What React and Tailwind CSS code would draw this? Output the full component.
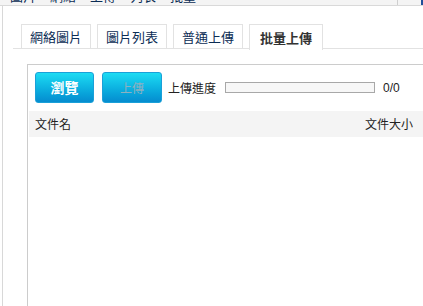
const TABS = [
  { label: '網絡圖片', w: 'w-[70px]' },
  { label: '圖片列表', w: 'w-[70px]' },
  { label: '普通上傳', w: 'w-[70px]' },
  { label: '批量上傳', w: 'w-[74px]', active: true },
]

export default function App() {
  return (
    <div
      className="w-[423px] h-[306px] bg-white overflow-hidden flex flex-col text-[12px] text-[#222]"
      style={{ fontFamily: '"Noto Sans CJK TC", "Liberation Sans", sans-serif' }}
    >
      {/* cut-off strip above */}
      <div className="h-[6px] shrink-0 bg-[#f4f4f4] border-b border-[#d9d9d9] overflow-hidden flex relative">
        <div className="-mt-[11px] pl-[10px] flex gap-[14px] text-[13px] text-[#0b2d55] leading-none">
          <span>圖片</span><span>網絡</span><span>上傳</span><span>列表</span><span>批量</span>
        </div>
        <div className="ml-auto w-[26px] border-l border-[#cfcfcf]"></div>
        <div className="absolute right-0 top-0 w-[2px] h-full bg-[#1f4f9a]"></div>
      </div>

      <div className="flex-1 flex ml-[2px] border-l border-[#d8d8d8]">
        <div className="flex-1 flex flex-col pl-[10px] pt-[18px]">
          {/* tabs */}
          <div className="flex gap-[6px] pl-[8px] border-b border-[#e2e2e2] h-[25px]">
            {TABS.map(t => (
              <div
                key={t.label}
                className={
                  t.w +
                  ' h-[25px] flex items-center justify-center border border-[#e2e2e2] border-b-0 text-[13px] ' +
                  (t.active ? 'bg-white text-[#333] font-bold h-[26px] -mb-[1px]' : 'text-[#0b2d55]')
                }
              >
                {t.label}
              </div>
            ))}
          </div>

          {/* panel */}
          <div className="flex-1 ml-[14px] mt-[15px] border-l border-t border-[#cccccc] flex flex-col">
            <div className="flex items-center pl-[7px] pt-[7px] pb-[8px]">
              <button className="w-[59px] h-[31px] rounded-[3px] bg-gradient-to-b from-[#1ddcf3] to-[#068ccf] border border-[#1aa0d8] text-white font-bold text-[14px]">
                瀏覽
              </button>
              <button className="ml-[8px] w-[60px] h-[31px] rounded-[3px] bg-gradient-to-b from-[#1ddcf3] to-[#068ccf] border border-[#1aa0d8] text-[#8fb0c0] text-[12px]">
                上傳
              </button>
              <span className="ml-[6px] text-[12px]">上傳進度</span>
              <div className="ml-[9px] w-[150px] h-[11px] border border-[#a8a8a8] bg-[#f7f7f7]"></div>
              <span className="ml-[8px] text-[12px]" style={{ fontFamily: '"Liberation Sans", sans-serif' }}>0/0</span>
            </div>
            <div className="ml-[1px] h-[26px] bg-[#f4f4f4] flex items-center justify-between pl-[6px] pr-[10px]">
              <span>文件名</span>
              <span>文件大小</span>
            </div>
          </div>
        </div>
      </div>
    </div>
  )
}
